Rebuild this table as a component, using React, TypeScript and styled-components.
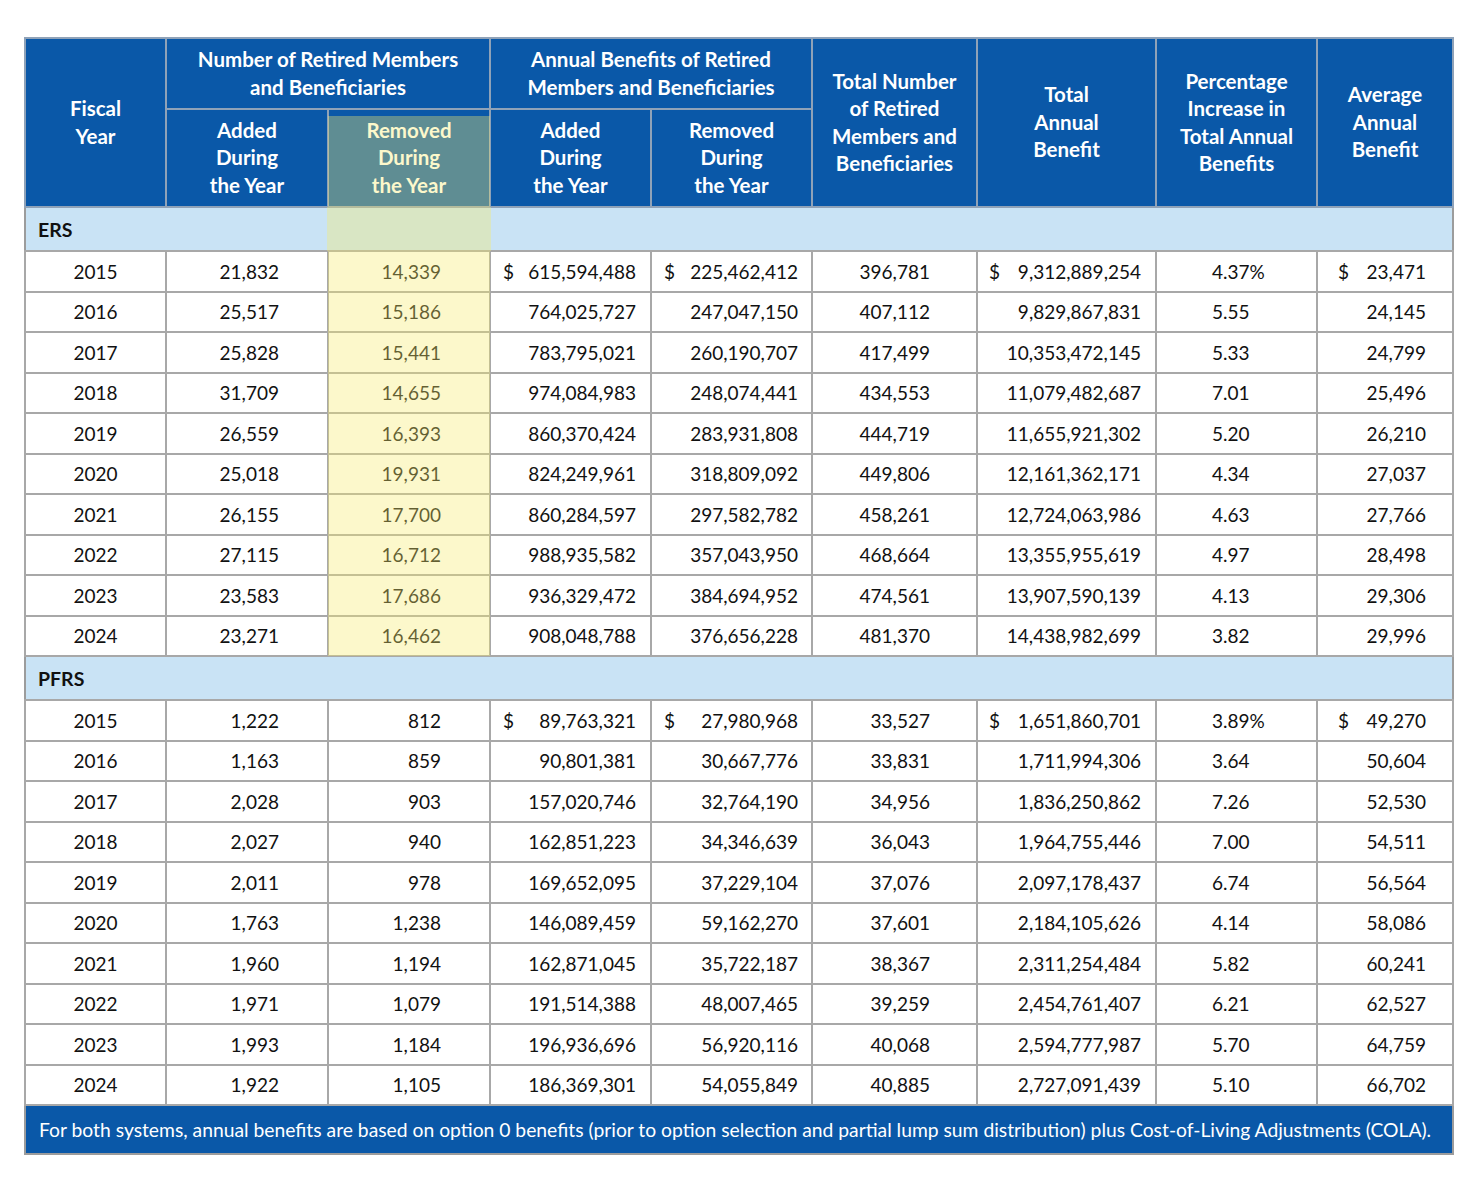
import React from "react";
import styled, { createGlobalStyle, css } from "styled-components";

const GlobalStyle = createGlobalStyle`
  html, body {
    margin: 0;
    padding: 0;
    background: #ffffff;
  }
  body {
    font-family: "Lato", "Open Sans", sans-serif;
  }
`;

const BLUE = "#0a58a8";
const GRID = "#a8a8a8";

const overlay = (top: number) => css`
  position: relative;
  &::after {
    content: "";
    position: absolute;
    left: -1px;
    right: -1px;
    top: ${top}px;
    bottom: -1px;
    background: rgba(246, 236, 112, 0.36);
    pointer-events: none;
  }
`;

const Page = styled.div`
  padding: 37px 0 40px 24px;
`;

const Table = styled.table`
  width: 1428px;
  table-layout: fixed;
  border-collapse: collapse;
  border: 2px solid #9c9c9c;
  font-family: "Lato", "Open Sans", sans-serif;
`;

const HeadRow = styled.tr<{ $h: number }>`
  height: ${(p) => p.$h}px;
`;

const HeadCell = styled.th<{ $highlight?: boolean }>`
  background: ${BLUE};
  color: #ffffff;
  font-weight: 700;
  font-size: 20.5px;
  line-height: 27.5px;
  text-align: center;
  vertical-align: middle;
  border: 2px solid #8fa2b8;
  padding: 0 2px;
  white-space: nowrap;
  ${(p) => p.$highlight && overlay(6)}
`;

const BandCell = styled.td<{ $highlight?: boolean }>`
  height: 42px;
  background: #c9e3f5;
  border-top: 2px solid ${GRID};
  border-bottom: 2px solid ${GRID};
  padding: 0 0 0 12px;
  font-size: 19.5px;
  font-weight: 700;
  color: #111111;
  ${(p) => p.$highlight && overlay(-1)}
`;

const DataRow = styled.tr`
  height: 40.5px;
`;

type Align = "center" | "right" | "left";

const Cell = styled.td<{ $align: Align; $pl: number; $pr: number; $highlight?: boolean }>`
  border: 2px solid ${GRID};
  background: #ffffff;
  color: #111111;
  font-size: 19px;
  text-align: ${(p) => p.$align};
  padding: 0 ${(p) => p.$pr}px 0 ${(p) => p.$pl}px;
  white-space: nowrap;
  ${(p) => p.$highlight && overlay(-1)}
`;

const Money = styled.div`
  display: flex;
  align-items: center;
`;

const Amount = styled.span`
  margin-left: auto;
`;

const FootCell = styled.td`
  height: 47px;
  background: ${BLUE};
  color: #ffffff;
  font-size: 19.3px;
  padding: 0 0 0 13px;
  white-space: nowrap;
  border-top: 2px solid ${GRID};
`;

type Col = { align: Align; pl: number; pr: number; money?: boolean };

const cols: Col[] = [
  { align: "center", pl: 0, pr: 0 },
  { align: "right", pl: 0, pr: 48 },
  { align: "right", pl: 0, pr: 48 },
  { align: "right", pl: 12, pr: 14, money: true },
  { align: "right", pl: 12, pr: 13, money: true },
  { align: "right", pl: 0, pr: 46 },
  { align: "right", pl: 11, pr: 14, money: true },
  { align: "left", pl: 55, pr: 0 },
  { align: "right", pl: 20, pr: 26, money: true },
];

const widths = [141, 162, 162, 161, 161, 165, 179, 161, 136];

const ers = [
  "2015 21,832 14,339 615,594,488 225,462,412 396,781 9,312,889,254 4.37% 23,471",
  "2016 25,517 15,186 764,025,727 247,047,150 407,112 9,829,867,831 5.55 24,145",
  "2017 25,828 15,441 783,795,021 260,190,707 417,499 10,353,472,145 5.33 24,799",
  "2018 31,709 14,655 974,084,983 248,074,441 434,553 11,079,482,687 7.01 25,496",
  "2019 26,559 16,393 860,370,424 283,931,808 444,719 11,655,921,302 5.20 26,210",
  "2020 25,018 19,931 824,249,961 318,809,092 449,806 12,161,362,171 4.34 27,037",
  "2021 26,155 17,700 860,284,597 297,582,782 458,261 12,724,063,986 4.63 27,766",
  "2022 27,115 16,712 988,935,582 357,043,950 468,664 13,355,955,619 4.97 28,498",
  "2023 23,583 17,686 936,329,472 384,694,952 474,561 13,907,590,139 4.13 29,306",
  "2024 23,271 16,462 908,048,788 376,656,228 481,370 14,438,982,699 3.82 29,996",
];

const pfrs = [
  "2015 1,222 812 89,763,321 27,980,968 33,527 1,651,860,701 3.89% 49,270",
  "2016 1,163 859 90,801,381 30,667,776 33,831 1,711,994,306 3.64 50,604",
  "2017 2,028 903 157,020,746 32,764,190 34,956 1,836,250,862 7.26 52,530",
  "2018 2,027 940 162,851,223 34,346,639 36,043 1,964,755,446 7.00 54,511",
  "2019 2,011 978 169,652,095 37,229,104 37,076 2,097,178,437 6.74 56,564",
  "2020 1,763 1,238 146,089,459 59,162,270 37,601 2,184,105,626 4.14 58,086",
  "2021 1,960 1,194 162,871,045 35,722,187 38,367 2,311,254,484 5.82 60,241",
  "2022 1,971 1,079 191,514,388 48,007,465 39,259 2,454,761,407 6.21 62,527",
  "2023 1,993 1,184 196,936,696 56,920,116 40,068 2,594,777,987 5.70 64,759",
  "2024 1,922 1,105 186,369,301 54,055,849 40,885 2,727,091,439 5.10 66,702",
];

const Section = ({ label, rows, highlight }: { label: string; rows: string[]; highlight?: boolean }) => (
  <>
    <tr>
      <BandCell colSpan={2}>{label}</BandCell>
      <BandCell $highlight={highlight} />
      <BandCell colSpan={6} />
    </tr>
    {rows.map((line, r) => {
      const values = line.split(" ");
      return (
        <DataRow key={values[0]}>
          {values.map((v, i) => {
            const c = cols[i];
            return (
              <Cell key={i} $align={c.align} $pl={c.pl} $pr={c.pr} $highlight={highlight && i === 2}>
                {c.money ? (
                  <Money>
                    {r === 0 && <span>$</span>}
                    <Amount>{v}</Amount>
                  </Money>
                ) : (
                  v
                )}
              </Cell>
            );
          })}
        </DataRow>
      );
    })}
  </>
);

const App = () => (
  <>
    <GlobalStyle />
    <Page>
      <Table>
        <colgroup>
          {widths.map((w, i) => (
            <col key={i} style={{ width: w }} />
          ))}
        </colgroup>
        <thead>
          <HeadRow $h={71}>
            <HeadCell rowSpan={2}>
              Fiscal
              <br />
              Year
            </HeadCell>
            <HeadCell colSpan={2}>
              Number of Retired Members
              <br />
              and Beneficiaries
            </HeadCell>
            <HeadCell colSpan={2}>
              Annual Benefits of Retired
              <br />
              Members and Beneficiaries
            </HeadCell>
            <HeadCell rowSpan={2}>
              Total Number
              <br />
              of Retired
              <br />
              Members and
              <br />
              Beneficiaries
            </HeadCell>
            <HeadCell rowSpan={2}>
              Total
              <br />
              Annual
              <br />
              Benefit
            </HeadCell>
            <HeadCell rowSpan={2}>
              Percentage
              <br />
              Increase in
              <br />
              Total Annual
              <br />
              Benefits
            </HeadCell>
            <HeadCell rowSpan={2}>
              Average
              <br />
              Annual
              <br />
              Benefit
            </HeadCell>
          </HeadRow>
          <HeadRow $h={98}>
            <HeadCell>
              Added
              <br />
              During
              <br />
              the Year
            </HeadCell>
            <HeadCell $highlight>
              Removed
              <br />
              During
              <br />
              the Year
            </HeadCell>
            <HeadCell>
              Added
              <br />
              During
              <br />
              the Year
            </HeadCell>
            <HeadCell>
              Removed
              <br />
              During
              <br />
              the Year
            </HeadCell>
          </HeadRow>
        </thead>
        <tbody>
          <Section label="ERS" rows={ers} highlight />
          <Section label="PFRS" rows={pfrs} />
          <tr>
            <FootCell colSpan={9}>
              For both systems, annual benefits are based on option 0 benefits (prior to option selection and partial
              lump sum distribution) plus Cost-of-Living Adjustments (COLA).
            </FootCell>
          </tr>
        </tbody>
      </Table>
    </Page>
  </>
);

export default App;
